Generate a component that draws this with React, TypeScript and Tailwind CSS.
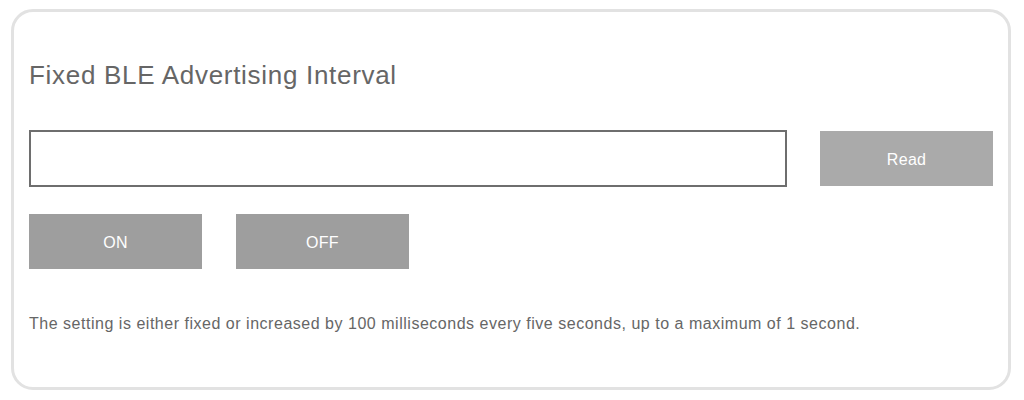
export default function App() {
  return (
    <div className="w-[1024px] h-[400px] bg-white pt-[9px] pl-[11px] font-['Liberation_Sans',Arial,sans-serif]">
      <div className="w-[1000px] h-[381px] rounded-[22px] border-[3px] border-[#e2e2e2] px-[15px] pt-[47px]">
        <h2 className="text-[26px] leading-[32px] tracking-[0.7px] text-[#666666]">Fixed BLE Advertising Interval</h2>

        <div className="mt-[39px] flex items-center">
          <input
            type="text"
            className="w-[759px] h-[57px] border-2 border-[#6e6e6e] bg-white outline-none"
          />
          <button className="ml-[33px] w-[173px] h-[55px] pt-[2px] bg-[#aaaaaa] text-white text-[16px] tracking-[0.3px]">Read</button>
        </div>

        <div className="mt-[27px] flex gap-[34px]">
          <button className="w-[173px] h-[55px] pt-[2px] bg-[#9e9e9e] text-white text-[16px] tracking-[0.3px]">ON</button>
          <button className="w-[173px] h-[55px] pt-[2px] bg-[#9e9e9e] text-white text-[16px] tracking-[0.3px]">OFF</button>
        </div>

        <p className="mt-[45px] text-[16px] leading-[20px] tracking-[0.52px] text-[#666666]">
          The setting is either fixed or increased by 100 milliseconds every five seconds, up to a maximum of 1 second.
        </p>
      </div>
    </div>
  )
}
